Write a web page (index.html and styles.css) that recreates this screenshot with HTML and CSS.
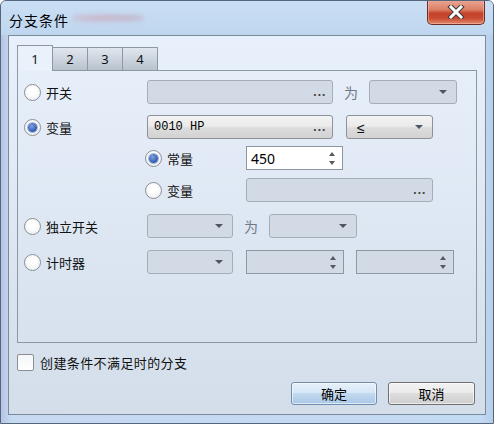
FILE: index.html
```html
<!DOCTYPE html>
<html lang="zh-CN">
<head>
    <meta charset="UTF-8">
    <title>分支条件</title>
    <link rel="stylesheet" href="styles.css">
</head>
<body>
    <div class="window">
        <div class="titlebar">
            <span class="title">分支条件</span>
            <span class="smear"></span>
            <button class="close" aria-label="关闭">
                <svg width="20" height="14" viewBox="0 0 20 14">
                    <path d="M5 2 L15 12 M15 2 L5 12" stroke="#3b3b3b" stroke-width="5" stroke-linecap="square" fill="none"/>
                    <path d="M5 2 L15 12 M15 2 L5 12" stroke="#fff" stroke-width="3" stroke-linecap="square" fill="none"/>
                </svg>
            </button>
        </div>

        <div class="client">
            <div class="tabs">
                <div class="tab active">1</div>
                <div class="tab">2</div>
                <div class="tab">3</div>
                <div class="tab">4</div>
            </div>

            <div class="panel">
                <div class="row">
                    <label class="opt"><span class="radio"></span>开关</label>
                    <div class="field off w186"><span></span><span class="dots">...</span></div>
                    <span class="sep">为</span>
                    <div class="field off w88"><span></span><span class="arrow"></span></div>
                </div>

                <div class="row gap11">
                    <label class="opt"><span class="radio checked"></span>变量</label>
                    <div class="field on w186"><span class="mono">0010 HP</span><span class="dots">...</span></div>
                    <div class="field on w87 ml13"><span class="le">≤</span><span class="arrow"></span></div>
                </div>

                <div class="row sub gap7">
                    <label class="opt small"><span class="radio checked"></span>常量</label>
                    <div class="field num w97"><span class="value">450</span><span class="spin"><i class="up"></i><i class="down"></i></span></div>
                </div>

                <div class="row sub gap8">
                    <label class="opt small"><span class="radio"></span>变量</label>
                    <div class="field off w187"><span></span><span class="dots">...</span></div>
                </div>

                <div class="row gap12">
                    <label class="opt"><span class="radio"></span>独立开关</label>
                    <div class="field off w86"><span></span><span class="arrow"></span></div>
                    <span class="sep">为</span>
                    <div class="field off w88"><span></span><span class="arrow"></span></div>
                </div>

                <div class="row gap12">
                    <label class="opt"><span class="radio"></span>计时器</label>
                    <div class="field off w86"><span></span><span class="arrow"></span></div>
                    <div class="field off flat w98 ml13"><span></span><span class="spin"><i class="up"></i><i class="down"></i></span></div>
                    <div class="field off flat w98 ml12"><span></span><span class="spin"><i class="up"></i><i class="down"></i></span></div>
                </div>
            </div>

            <label class="check"><span class="box"></span>创建条件不满足时的分支</label>

            <div class="buttons">
                <button class="btn default">确定</button>
                <button class="btn">取消</button>
            </div>
        </div>
    </div>
</body>
</html>
```

FILE: styles.css
```css
body {
    margin: 0;
    font-family: "Noto Sans CJK SC", "Noto Sans", sans-serif;
    font-size: 13px;
    color: #111;
}

.window {
    width: 494px;
    height: 424px;
    box-sizing: border-box;
    border: 1px solid #55657a;
    border-radius: 6px 6px 0 0;
    background: linear-gradient(to right, #b7c3e4 0, #c6daf2 10px, #c3daf3 480px, #b3cbe8 494px);
    display: flex;
    flex-direction: column;
    overflow: hidden;
}

/* title bar */

.titlebar {
    height: 34px;
    display: flex;
    align-items: flex-start;
    background: linear-gradient(to bottom, #cadff4, #bfd6ef);
    position: relative;
}

.title {
    margin: 10px 0 0 8px;
    font-size: 14px;
    letter-spacing: 1px;
    line-height: 18px;
    color: #000;
}

.smear {
    position: absolute;
    left: 72px;
    top: 11px;
    width: 70px;
    height: 12px;
    background: radial-gradient(ellipse at 30% 50%, rgba(214, 120, 130, 0.35), transparent 70%),
                radial-gradient(ellipse at 85% 50%, rgba(190, 110, 130, 0.3), transparent 60%);
    filter: blur(2px);
}

.close {
    margin: -1px 8px 0 auto;
    width: 58px;
    height: 25px;
    border: 1px solid #6e2d26;
    border-top: none;
    border-radius: 0 0 5px 5px;
    background: linear-gradient(to bottom, #e9a797 0, #dd8066 40%, #c5432b 55%, #c8492f 75%, #e28a6c 100%);
    box-shadow: inset 0 0 0 1px rgba(255, 200, 180, 0.5);
    display: flex;
    align-items: center;
    justify-content: center;
    padding: 0;
}

/* client area */

.client {
    margin: 0 7px;
    height: 380px;
    box-sizing: border-box;
    border: 1px solid #7b8a9b;
    background: linear-gradient(to bottom, #e8f0fb, #d3deea);
    padding: 9px 8px 0 8px;
    display: flex;
    flex-direction: column;
}

.tabs {
    display: flex;
    align-items: flex-end;
    height: 25px;
}

.tab {
    width: 36px;
    height: 23px;
    box-sizing: border-box;
    border: 1px solid #8d98a4;
    border-bottom: none;
    margin-left: -1px;
    background: linear-gradient(to bottom, #e1e7ee, #b8c2cd);
    display: flex;
    align-items: center;
    justify-content: center;
    font-family: "Noto Sans", sans-serif;
    font-size: 13px;
    color: #111;
}

.tab.active {
    margin-left: 0;
    height: 26px;
    margin-bottom: -1px;
    background: #eaf1fb;
    position: relative;
    z-index: 1;
}

.panel {
    height: 273px;
    box-sizing: border-box;
    border: 1px solid #8d98a4;
    padding: 9px 0 0 6px;
}

.row {
    display: flex;
    align-items: center;
    height: 24px;
}

.row.sub { padding-left: 121px; }
.gap7 { margin-top: 7px; }
.gap8 { margin-top: 8px; }
.gap11 { margin-top: 11px; }
.gap12 { margin-top: 12px; }

.opt {
    width: 123px;
    display: flex;
    align-items: center;
    font-size: 13px;
}

.opt.small { width: 101px; }

.radio {
    width: 17px;
    height: 17px;
    box-sizing: border-box;
    border: 1px solid #8b8f95;
    border-radius: 50%;
    background: radial-gradient(circle at 50% 40%, #ffffff 30%, #e8eaee 100%);
    margin-right: 5px;
    display: flex;
    align-items: center;
    justify-content: center;
}

.radio.checked::after {
    content: "";
    width: 9px;
    height: 9px;
    border-radius: 50%;
    background: radial-gradient(circle at 40% 35%, #7fa2e0, #2f58ab 70%);
    box-shadow: 0 0 0 1px #9fb6e2;
}

.sep {
    width: 36px;
    text-align: center;
    font-size: 14px;
    color: #707a86;
}

.field {
    height: 24px;
    box-sizing: border-box;
    border: 1px solid #a5adb6;
    border-radius: 3px;
    display: flex;
    align-items: center;
    justify-content: space-between;
    padding: 0 6px 0 6px;
}

.field.off { background: #d2dbe5; }

.field.flat {
    border-radius: 0;
    border-color: #8f98a2;
}

.field.on {
    background: linear-gradient(to bottom, #f3f3f3, #ebebeb 45%, #dcdcdc 55%, #d2d2d2);
    border-color: #8e9196;
}

.field.num {
    background: #fff;
    border: 1px solid #8e979f;
    border-radius: 0;
    padding-left: 4px;
}

.w86 { width: 86px; }
.w87 { width: 87px; }
.w88 { width: 88px; }
.w97 { width: 97px; }
.w98 { width: 98px; }
.w186 { width: 186px; }
.w187 { width: 187px; }
.ml12 { margin-left: 12px; }
.ml13 { margin-left: 13px; }

.mono {
    font-family: "Liberation Mono", monospace;
    font-size: 12px;
    color: #000;
}

.le {
    font-family: "Noto Sans", sans-serif;
    font-size: 14px;
    margin-left: 4px;
}

.value {
    font-family: "Noto Sans", sans-serif;
    font-size: 14px;
    color: #000;
}

.dots {
    font-family: "DejaVu Sans", sans-serif;
    font-weight: bold;
    font-size: 10px;
    letter-spacing: 0.5px;
    color: #444;
    margin-top: 1px;
}

.arrow {
    width: 0;
    height: 0;
    border-left: 4px solid transparent;
    border-right: 4px solid transparent;
    border-top: 4px solid #4e5660;
    margin-right: 3px;
}

.spin {
    display: flex;
    flex-direction: column;
    gap: 5px;
    margin-right: 1px;
}

.spin i {
    width: 0;
    height: 0;
    border-left: 3.5px solid transparent;
    border-right: 3.5px solid transparent;
}

.spin .up { border-bottom: 4px solid #555b62; }
.spin .down { border-top: 4px solid #555b62; }

/* bottom */

.check {
    margin-top: 11px;
    display: flex;
    align-items: center;
    height: 17px;
    font-size: 13px;
    letter-spacing: 0.4px;
}

.box {
    width: 17px;
    height: 17px;
    box-sizing: border-box;
    border: 1px solid #8b8f95;
    border-radius: 2px;
    background: linear-gradient(to bottom, #f4f6f9, #ffffff);
    margin-right: 6px;
}

.buttons {
    margin-top: 11px;
    display: flex;
    justify-content: flex-end;
    gap: 11px;
    padding-right: 2px;
}

.btn {
    width: 87px;
    height: 23px;
    border: 1px solid #707070;
    border-radius: 3px;
    background: linear-gradient(to bottom, #f2f2f2, #ebebeb 45%, #dddddd 50%, #cfcfcf);
    box-shadow: inset 0 0 0 1px rgba(255, 255, 255, 0.6);
    font-family: "Noto Sans CJK SC", sans-serif;
    font-size: 13px;
    color: #000;
    padding: 0;
}

.btn.default {
    width: 86px;
    border-color: #6f8fb0;
    background: linear-gradient(to bottom, #e6f0fa, #d8e7f6 45%, #c3d9ef 50%, #aac8e6);
}
```
